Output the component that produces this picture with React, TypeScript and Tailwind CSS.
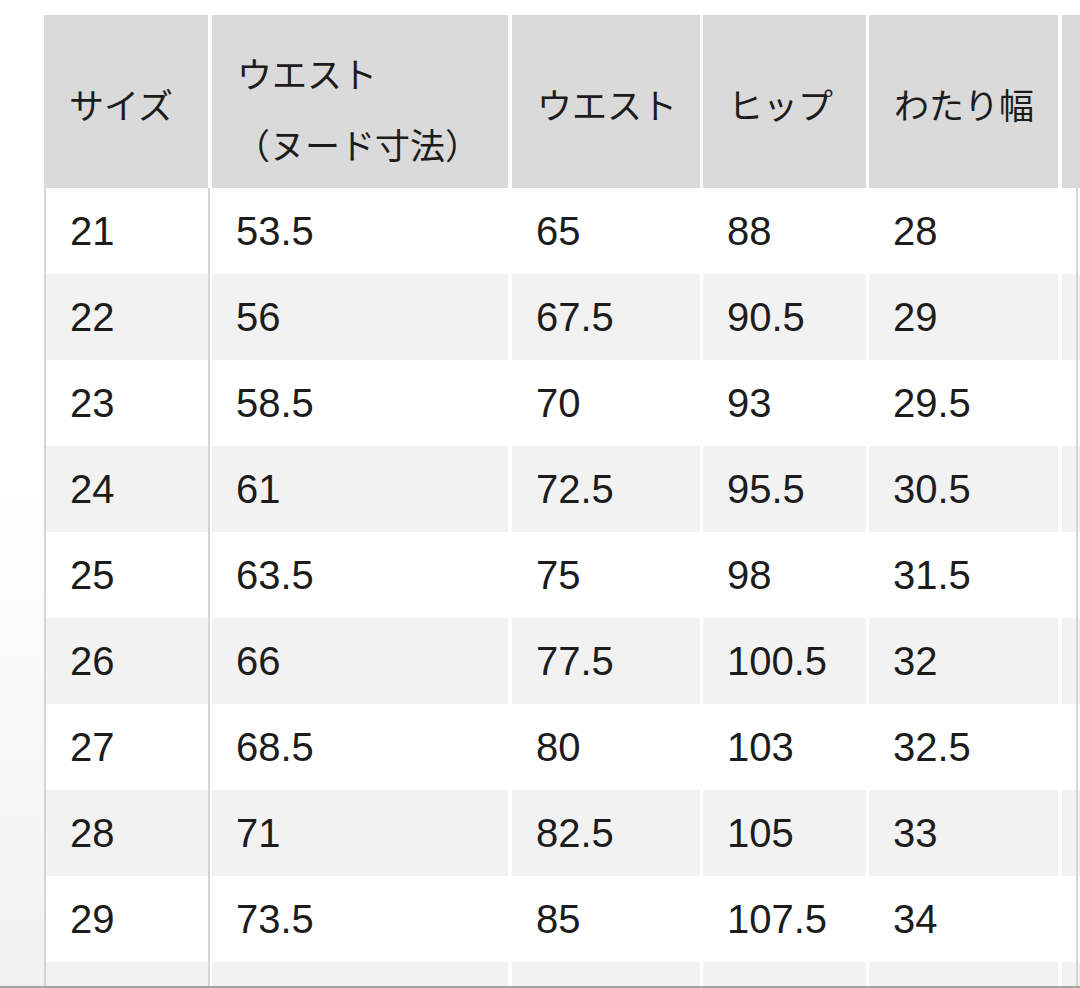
import React from "react";

const rows = [
  ["21", "53.5", "65", "88", "28"],
  ["22", "56", "67.5", "90.5", "29"],
  ["23", "58.5", "70", "93", "29.5"],
  ["24", "61", "72.5", "95.5", "30.5"],
  ["25", "63.5", "75", "98", "31.5"],
  ["26", "66", "77.5", "100.5", "32"],
  ["27", "68.5", "80", "103", "32.5"],
  ["28", "71", "82.5", "105", "33"],
  ["29", "73.5", "85", "107.5", "34"],
  ["", "", "", "", ""],
];

const jp = "font-['Noto_Sans_CJK_JP','Noto_Sans',sans-serif]";
const num = "font-['Liberation_Sans','Arial',sans-serif]";

function HeaderRow() {
  const cell = `flex h-full shrink-0 items-center whitespace-nowrap bg-[#dadada] pl-[25px] text-[35px] text-[#1c1c1c] ${jp}`;
  return (
    <div className="flex h-[173px] shrink-0">
      <div className={`${cell} w-[164px] pt-[6px]`}>サイズ</div>
      <div className={`${cell} ml-[4px] w-[296px] pt-[13px]`}>
        <div className="leading-[71px]">
          <div>ウエスト</div>
          <div className="-ml-[2px]">（ヌード寸法）</div>
        </div>
      </div>
      <div className={`${cell} ml-[4px] w-[188px] pt-[6px]`}>ウエスト</div>
      <div className={`${cell} ml-[3px] w-[163px] pt-[6px]`}>ヒップ</div>
      <div className={`${cell} ml-[3px] w-[189px] pt-[6px]`}>わたり幅</div>
      <div className={`${cell} ml-[4px] w-[200px]`}></div>
    </div>
  );
}

function BodyRow({ values, shaded }: { values: string[]; shaded: boolean }) {
  const bg = shaded ? "bg-[#f2f2f2]" : "bg-white";
  const cell = `flex h-full shrink-0 items-center whitespace-nowrap ${bg} text-[40px] text-[#1c1c1c] ${num}`;
  return (
    <div className="flex h-[86px] shrink-0">
      <div className="flex h-full w-[166px] shrink-0 border-x-2 border-[#d4d4d4]">
        <div className={`${cell} w-full pl-[24px]`}>{values[0]}</div>
      </div>
      <div className={`${cell} ml-[2px] w-[296px] pl-[24px]`}>{values[1]}</div>
      <div className={`${cell} ml-[4px] w-[188px] pl-[24px]`}>{values[2]}</div>
      <div className={`${cell} ml-[3px] w-[163px] pl-[24px]`}>{values[3]}</div>
      <div className={`${cell} ml-[3px] w-[189px] pl-[24px]`}>{values[4]}</div>
      <div className={`${cell} ml-[4px] w-[200px]`}></div>
    </div>
  );
}

export default function App() {
  return (
    <div className="relative flex h-[988px] w-[1080px] overflow-hidden border-b-2 border-[#a3a3a3] bg-white">
      <div className="w-[44px] shrink-0 bg-gradient-to-b from-white via-white to-[#f1f1f1]" />
      <div className="flex min-w-0 flex-1 flex-col overflow-hidden pt-[15px]">
        <HeaderRow />
        {rows.map((r, i) => (
          <BodyRow key={i} values={r} shaded={i % 2 === 1} />
        ))}
      </div>
      <div className="absolute right-[2px] top-[188px] bottom-0 w-[2px] bg-[#d6d6d6]" />
    </div>
  );
}
